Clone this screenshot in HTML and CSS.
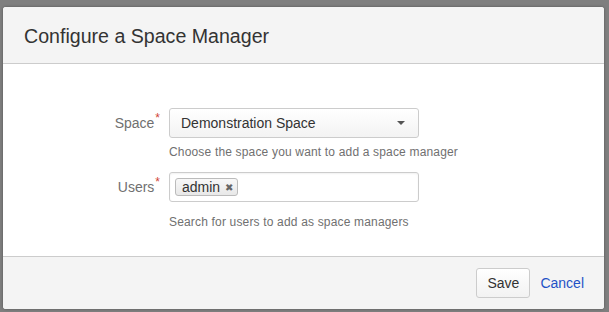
FILE: index.html
```html
<!DOCTYPE html>
<html>
<head>
  <meta charset="utf-8">
  <title>Configure a Space Manager</title>
  <link rel="stylesheet" href="styles.css">
</head>
<body>
  <div class="dialog">
    <header class="dialog-header">
      <h2>Configure a Space Manager</h2>
    </header>

    <form class="dialog-body">
      <div class="field-group">
        <label>Space<span class="req">*</span></label>
        <div class="field">
          <div class="select">
            <span>Demonstration Space</span>
            <span class="caret"></span>
          </div>
          <div class="hint hint-first">Choose the space you want to add a space manager</div>
        </div>
      </div>

      <div class="field-group">
        <label>Users<span class="req">*</span></label>
        <div class="field">
          <div class="token-input">
            <span class="token">admin <span class="remove">&#x2716;</span></span>
          </div>
          <div class="hint hint-last">Search for users to add as space managers</div>
        </div>
      </div>
    </form>

    <footer class="dialog-footer">
      <button class="button">Save</button>
      <a class="cancel" href="#">Cancel</a>
    </footer>
  </div>
</body>
</html>
```

FILE: styles.css
```css
html, body {
  height: 100%;
}

body {
  margin: 0;
  background: #7f7f7f;
  font-family: "Liberation Sans", Arial, sans-serif;
  color: #333;
  padding: 7px 5px 3px 3px;
  box-sizing: border-box;
}

.dialog {
  width: 601px;
  height: 302px;
  background: #fff;
  border-radius: 3px;
  box-shadow: 0 0 3px rgba(0, 0, 0, 0.35);
  display: flex;
  flex-direction: column;
  overflow: hidden;
}

.dialog-header {
  height: 56px;
  background: #f4f4f4;
  border-bottom: 1px solid #ccc;
  padding-left: 21px;
  display: flex;
  align-items: center;
}

.dialog-header h2 {
  margin: 2px 0 0;
  font-size: 19.6px;
  font-weight: normal;
  color: #333;
}

.dialog-body {
  flex: 1;
  margin: 0;
  padding-top: 44px;
}

.field-group {
  display: flex;
  align-items: flex-start;
}

.field-group label {
  width: 157px;
  margin-right: 9px;
  text-align: right;
  font-size: 14px;
  color: #707070;
  line-height: 30px;
}

.req {
  color: #d04437;
  font-size: 12px;
  position: relative;
  top: -6px;
  margin-left: 1px;
}

.field {
  width: 250px;
}

.select {
  height: 30px;
  box-sizing: border-box;
  border: 1px solid #ccc;
  border-radius: 3px;
  background: linear-gradient(#fff, #f3f3f3);
  display: flex;
  align-items: center;
  justify-content: space-between;
  padding: 0 13px 0 11px;
  font-size: 14px;
  color: #333;
}

.caret {
  width: 0;
  height: 0;
  border-left: 4px solid transparent;
  border-right: 4px solid transparent;
  border-top: 4px solid #555;
}

.token-input {
  height: 30px;
  box-sizing: border-box;
  border: 1px solid #ccc;
  border-radius: 3px;
  background: #fff;
  box-shadow: inset 0 1px 2px rgba(0, 0, 0, 0.06);
  padding: 5px 0 0 5px;
}

.token {
  display: inline-block;
  height: 18px;
  line-height: 16px;
  box-sizing: border-box;
  padding: 0 4px 0 6px;
  border: 1px solid #bbb;
  border-radius: 3px;
  background: linear-gradient(#f8f8f8, #e8e8e8);
  font-size: 14px;
  color: #333;
}

.remove {
  font-size: 10px;
  color: #666;
  margin-left: 1px;
  position: relative;
  top: -1px;
}

.hint {
  font-size: 12px;
  color: #707070;
  line-height: 20px;
  letter-spacing: 0.17px;
  white-space: nowrap;
}

.hint-first {
  margin-top: 4px;
  margin-bottom: 10px;
}

.hint-last {
  margin-top: 10px;
}

.dialog-footer {
  height: 52px;
  background: #f4f4f4;
  border-top: 1px solid #ccc;
  display: flex;
  align-items: center;
  justify-content: flex-end;
  padding-right: 20px;
}

.button {
  height: 30px;
  width: 54px;
  border: 1px solid #ccc;
  border-radius: 3px;
  background: linear-gradient(#fff, #f2f2f2);
  font-family: inherit;
  font-size: 14px;
  color: #333;
  padding: 0;
  margin-right: 10px;
}

.cancel {
  font-size: 14px;
  color: #1f52c6;
  text-decoration: none;
}
```
